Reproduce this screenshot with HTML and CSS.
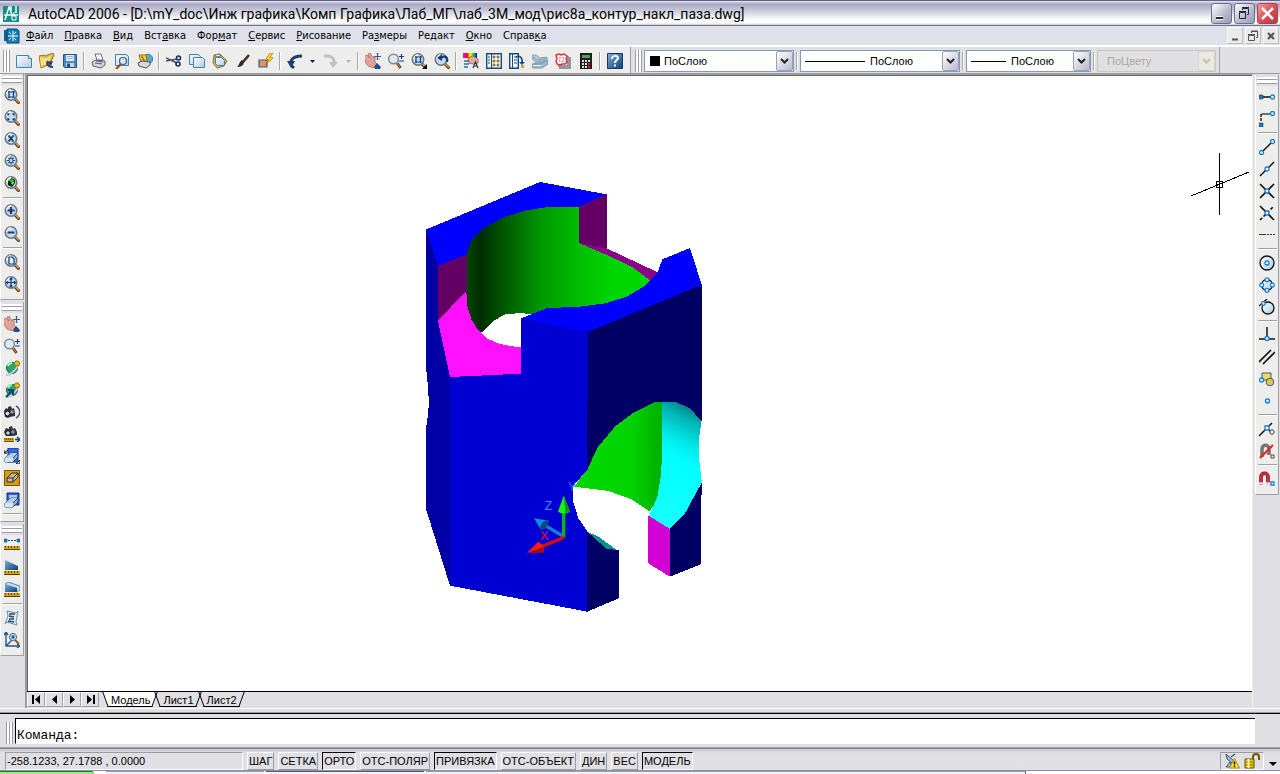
FILE: index.html
```html
<!DOCTYPE html>
<html lang="ru">

<head>
  <meta charset="utf-8">
  <title>AutoCAD 2006</title>
  <link rel="stylesheet" href="styles.css">
</head>

<body>
  <!-- Icon sprite -->
  <svg class="sprite" aria-hidden="true">
    <defs>
      <linearGradient id="g-paper" x1="0" y1="0" x2="1" y2="1"><stop offset="0" stop-color="#fff"/><stop offset="1" stop-color="#a9cbe6"/></linearGradient>
      <linearGradient id="g-steel" x1="0" y1="0" x2="1" y2="1"><stop offset="0" stop-color="#7fb2d9"/><stop offset="1" stop-color="#0f3d73"/></linearGradient>
      <linearGradient id="g-rainbow"><stop offset="0" stop-color="#f0f"/><stop offset=".3" stop-color="#f00"/><stop offset=".5" stop-color="#ff0"/><stop offset=".75" stop-color="#0d0"/><stop offset="1" stop-color="#00f"/></linearGradient>
      <linearGradient id="g-green"><stop offset="0" stop-color="#004a00"/><stop offset=".08" stop-color="#002c00"/><stop offset=".2" stop-color="#005400"/><stop offset=".4" stop-color="#009600"/><stop offset=".6" stop-color="#00bc00"/><stop offset=".8" stop-color="#00d600"/><stop offset="1" stop-color="#00d800"/></linearGradient>
      <linearGradient id="g-green2"><stop offset="0" stop-color="#00d800"/><stop offset=".6" stop-color="#00d400"/><stop offset="1" stop-color="#00ac00"/></linearGradient>
      <linearGradient id="g-cyan" x1=".6" y1="0" x2=".4" y2="1"><stop offset="0" stop-color="#007878"/><stop offset=".12" stop-color="#00b4b4"/><stop offset=".3" stop-color="#00e8e8"/><stop offset=".45" stop-color="#00ffff"/><stop offset="1" stop-color="#18ffff"/></linearGradient>
    </defs>
    <symbol id="lens" viewBox="0 0 16 16">
      <path d="M11 11l4.500 4.500" stroke="#5a3614" stroke-width="3"/>
      <path d="M11 10.500l4 4" stroke="#d9a066" stroke-width="1.200"/>
      <circle cx="7" cy="6.500" r="5.700" fill="#c3dbee" stroke="#6d747c" stroke-width="1.600"/>
      <path d="M3 6a4 4 0 0 1 4-4" fill="none" stroke="#fff" stroke-width="1.500"/>
    </symbol>
    <symbol id="zoom-window" viewBox="0 0 16 16"><use href="#lens"/><path d="M5 3v7M9.500 10V3M4 4h7M4 9h6.500" fill="none" stroke="#123f7a" stroke-width="1.200"/></symbol>
    <symbol id="zoom-dynamic" viewBox="0 0 16 16"><use href="#lens"/><path d="M4 5.500V4h1.500M8.500 4H10v1.500M10 8v1.500H8.500M5.500 9.500H4V8" fill="none" stroke="#123f7a" stroke-width="1.400"/></symbol>
    <symbol id="zoom-scale" viewBox="0 0 16 16"><use href="#lens"/><path d="M4.500 3.500l5 6M9.500 3.500l-5 6" stroke="#123f7a" stroke-width="1.900"/></symbol>
    <symbol id="zoom-center" viewBox="0 0 16 16"><use href="#lens"/><path d="M7 2.500v2.500M7 8v2.500M3 6.500h2.500M8.500 6.500H11M4.500 4l1.500 1.500M9.500 4L8 5.500M4.500 9L6 7.500M9.500 9L8 7.500" stroke="#123f7a" stroke-width="1.200"/></symbol>
    <symbol id="zoom-object" viewBox="0 0 16 16"><use href="#lens"/><path d="M4 5l4-3 3 2v3L8 11 4 9z" fill="#111"/><path d="M4 5l4-2 2 1-2 2.500z" fill="#0d0"/><path d="M7 7l3-2v2L8 9z" fill="#6f6"/></symbol>
    <symbol id="zoom-in" viewBox="0 0 16 16"><use href="#lens"/><path d="M7 3v7M3.500 6.500h7" stroke="#123f7a" stroke-width="2.200"/></symbol>
    <symbol id="zoom-out" viewBox="0 0 16 16"><use href="#lens"/><path d="M3.500 6.500h7" stroke="#123f7a" stroke-width="2"/></symbol>
    <symbol id="zoom-all" viewBox="0 0 16 16"><use href="#lens"/><path d="M5 3h3l2 2v5H5z" fill="#e8f3fc" stroke="#123f7a" stroke-width="1.200"/></symbol>
    <symbol id="zoom-extents" viewBox="0 0 16 16"><use href="#lens"/><path d="M7 2v9M2.500 6.500h9M5.700 3.500L7 2l1.300 1.500M5.700 9.500L7 11l1.300-1.500M4 5.200L2.500 6.500 4 7.800M10 5.200l1.500 1.300L10 7.800" fill="none" stroke="#123f7a" stroke-width="1.200"/></symbol>
    <symbol id="pan" viewBox="0 0 16 16">
      <path d="M0 3l2-1 3 3-2-4 2-1 3 5 1-2 1 1v5l2 2-4 4-5-2-2-3-2-1 2-1-3-3 1-1z" fill="#dfa39a" stroke="#a86e69" stroke-width=".8"/>
      <path d="M9 14l3-4 4 4-1 2h-5z" fill="#234d84"/>
      <path d="M12.500 0v7M9.500 3.500h6.500M11.500 1.200l1-1 1 1M11.500 5.800l1 1 1-1" fill="none" stroke="#2a5c96"/>
    </symbol>
    <symbol id="zoom-rt" viewBox="0 0 16 16">
      <path d="M9 10l3.500 5" stroke="#5a3614" stroke-width="2.800"/><path d="M9 10l3 4.500" stroke="#d9a066"/>
      <circle cx="5.500" cy="6" r="4.800" fill="#dceaf4" stroke="#85898c" stroke-width="1.500"/>
      <path d="M11 3.500h5M13.500 1v5M11 8h5" stroke="#123f7a" stroke-width="1.200"/>
    </symbol>
    <symbol id="zoom-fly" viewBox="0 0 16 16"><use href="#zoom-window"/><path d="M16 11v5h-5z" fill="#000"/></symbol>
    <symbol id="zoom-prev" viewBox="0 0 16 16"><use href="#lens"/><path d="M13 9c1-5-2-7-6-4" fill="none" stroke="#123f7a" stroke-width="2.200"/><path d="M3 5l5-4v7z" fill="#123f7a"/></symbol>

    <symbol id="new" viewBox="0 0 16 16"><path d="M.5 2.500h12l3 3v9H.5z" fill="url(#g-paper)" stroke="#4483ae"/><path d="M12.500 2.500v3h3" fill="#fff" stroke="#4483ae"/></symbol>
    <symbol id="open" viewBox="0 0 16 16"><path d="M0 3l5-1 1 1 8-3 1 2-4 9-9 4z" fill="#d9b54a" stroke="#9a7a24"/><path d="M1 4l6 1 6-3-4 8-7 4z" fill="#f6dd82"/><path d="M9 8c-2 3 0 6 5 6" fill="none" stroke="#223f6e" stroke-width="2"/><path d="M8 9l6-1-2 5z" fill="#223f6e"/></symbol>
    <symbol id="save" viewBox="0 0 16 16"><path d="M1.500 1.500h13v13h-12l-1-1z" fill="#4b87c2" stroke="#245487"/><path d="M4 2h8v6H4z" fill="#e6eff8"/><path d="M5 3.500h6M5 5.500h6" stroke="#8fb4d6"/><path d="M4 10h8v4H4z" fill="#c8d4e0"/><path d="M5 10.500h3V14H5z" fill="#24507f"/></symbol>
    <symbol id="print" viewBox="0 0 16 16"><path d="M4 1h6l2 6H6z" fill="#fff" stroke="#68717e"/><path d="M1 9l4-2 9 1v4l-4 3-8-2z" fill="#d4d8e0" stroke="#5a6270"/><path d="M4 10l7 1M5 8l7 1" stroke="#525a68"/></symbol>
    <symbol id="preview" viewBox="0 0 16 16"><path d="M1.500 1.500h11l2 2v9h-13z" fill="url(#g-paper)" stroke="#4483ae"/><circle cx="9" cy="8" r="3.500" fill="#d2e6f6" stroke="#4d5a68" stroke-width="1.200"/><path d="M7 11l-5 5" stroke="#8b5427" stroke-width="2.200"/></symbol>
    <symbol id="publish" viewBox="0 0 16 16"><circle cx="11" cy="6" r="4.700" fill="#58acd4" stroke="#3c7699"/><path d="M2 2h7l1 6-6 1z" fill="#ffd633" stroke="#906a00"/><path d="M4 4h2v3h2" fill="none" stroke="#8b4c00"/><path d="M1 10l4-2 8 1v3l-4 3-7-2z" fill="#d4d8e0" stroke="#4b5462"/></symbol>
    <symbol id="cut" viewBox="0 0 16 16"><path d="M0 5l11 5M0 8l11-2" stroke="#4d545e" stroke-width="1.500"/><circle cx="12.500" cy="5" r="2" fill="none" stroke="#172c64" stroke-width="1.600"/><circle cx="12" cy="11" r="2" fill="none" stroke="#172c64" stroke-width="1.600"/></symbol>
    <symbol id="copy" viewBox="0 0 16 16"><path d="M.5 1.500h9l2 2v8H.5z" fill="url(#g-paper)" stroke="#4483ae"/><path d="M4.500 4.500h9l2 2v8h-11z" fill="url(#g-paper)" stroke="#4483ae"/></symbol>
    <symbol id="paste" viewBox="0 0 16 16"><path d="M2 2l6-1 7 7-3 5-7 2-4-5z" fill="#d4ae5a" stroke="#957229"/><path d="M3.500 4.500h6l3 3v5h-7l-2-2z" fill="url(#g-paper)" stroke="#4483ae"/><path d="M3 2l4-1 2 2-5 1z" fill="#eee" stroke="#777"/></symbol>
    <symbol id="match" viewBox="0 0 16 16"><path d="M14 2l-6 7" stroke="#4b2d1b" stroke-width="2.600"/><path d="M9 9c0 4-4 5-7 5 2-1 2-5 5-7z" fill="#2d2d33"/></symbol>
    <symbol id="block" viewBox="0 0 16 16"><path d="M1 7h8v7H1z" fill="#ef9259" stroke="#2e5f94" stroke-width="1.200"/><path d="M12 0L8 6l3 1-4 5 8-7-3-1 3-4z" fill="#ffd91c" stroke="#a07000" stroke-width=".7"/></symbol>
    <symbol id="undo" viewBox="0 0 16 16"><path d="M7 15c-6-4-4-12 8-12" fill="none" stroke="#1c3c70" stroke-width="2.800"/><path d="M0 8h8l-4 7z" fill="#1c3c70"/></symbol>
    <symbol id="redo" viewBox="0 0 16 16"><path d="M1 3c8-1 12 3 9 9" fill="none" stroke="#bcbfc2" stroke-width="2.800"/><path d="M6 9h9l-5 6z" fill="#bcbfc2"/></symbol>
    <symbol id="drop" viewBox="0 0 5 3"><path d="M0 0h5L2.500 3z" fill="currentColor"/></symbol>
    <symbol id="props" viewBox="0 0 16 16"><path d="M0 0h14v5H0z" fill="url(#g-rainbow)"/><path d="M5 5l5-2 5 3v4l-5 1-4-1z" fill="#e1aba1" stroke="#915b55" stroke-width=".8"/><path d="M1 8h5M1 11h5M1 14h4" stroke="#386c96" stroke-width="1.500"/><path d="M10 15l2.500-6 2.500 6M11 13h3" fill="none" stroke="#233449" stroke-width="1.200"/></symbol>
    <symbol id="center" viewBox="0 0 16 16"><path d="M.7.7h14.600v14.600H.7z" fill="#f3f8fc" stroke="#17487f" stroke-width="1.400"/><path d="M5.500 1v14" stroke="#17487f"/><path d="M2 4h2M2 7h2M2 10h2" stroke="#17487f"/><path d="M7 3h2v2H7zM11 3h2v2h-2zM7 7h2v2H7zM11 7h2v2h-2zM7 11h2v2H7zM11 11h2v2h-2z" fill="#d5a72d" stroke="#6d5315" stroke-width=".6"/></symbol>
    <symbol id="palettes" viewBox="0 0 16 16"><path d="M.7.7h8.600v14.600H.7z" fill="#f3f8fc" stroke="#17487f" stroke-width="1.400"/><path d="M3.500 1v14M5 4h3M5 7h3M5 10h3" stroke="#17487f"/><path d="M7 4c4-2 7 1 6 6" fill="none" stroke="#17487f" stroke-width="1.500"/><path d="M10 9h6l-3 3z" fill="#17487f"/><path d="M12 12h3v3h-3z" fill="#d5a72d"/></symbol>
    <symbol id="sheets" viewBox="0 0 16 16"><path d="M0 2h4l4 3 7-1v4l-5 3H6L0 6z" fill="#c3d0da" stroke="#78909f" stroke-width=".8"/><path d="M0 2l5 4 10-2v4l-6 4-9-1 5-3-5-3z" fill="#8fb2ca"/><path d="M0 11h8l8-4v4l-6 4H0z" fill="#a1bac9" stroke="#6c8aa0" stroke-width=".8"/><path d="M1 12.500h8" stroke="#e4edf3"/></symbol>
    <symbol id="markup" viewBox="0 0 16 16"><path d="M4 15h11V4M3 13h10V3" fill="none" stroke="#78797d" stroke-width="1.500"/><path d="M1 2l3-1 2 1 3-1 3 2-1 3 1 3-2 2H7l-2 1-3-1-1-3 1-2z" fill="#fff" stroke="#e42a38" stroke-width="1.400"/><path d="M4 4l2 1 3-1-1 3 1 2-3-1-2 1 1-3z" fill="none" stroke="#f08a90" stroke-width=".8"/></symbol>
    <symbol id="calc" viewBox="0 0 16 16"><path d="M2 0h12v16H2z" fill="#1d1d1d"/><path d="M4 2h8v3H4z" fill="#4fa05b"/><path d="M4 7h2v2H4zM7 7h2v2H7zM10 7h2v2h-2zM4 10h2v2H4zM7 10h2v2H7zM4 13h2v2H4zM7 13h2v2H7z" fill="#ddd"/><path d="M10 10h2v2h-2zM10 13h2v2h-2z" fill="#e32424"/></symbol>
    <symbol id="help" viewBox="0 0 16 16"><path d="M.5.5h15v15H.5z" fill="url(#g-steel)" stroke="#123a6b"/><path d="M5 6c0-4 6-4 6-1 0 2-3 2-3 5M8 11.500v2" fill="none" stroke="#fff" stroke-width="2"/></symbol>

    <symbol id="orbit" viewBox="0 0 16 16"><circle cx="8" cy="8" r="5.500" fill="#28a868" stroke="#14603a"/><path d="M4 6a4 4 0 0 1 4-3" fill="none" stroke="#a5f5c8" stroke-width="2"/><path d="M2 15C8 14 14 9 14 3" fill="none" stroke="#8da9c4" stroke-width="2.200"/><path d="M2 15C8 14 14 9 14 3" fill="none" stroke="#fff" stroke-width=".8"/><circle cx="13" cy="3.500" r="2.600" fill="#e5ba1e" stroke="#90700a"/></symbol>
    <symbol id="orbit-c" viewBox="0 0 16 16"><use href="#orbit"/><path d="M2 15l6-6M4 8h5v5" fill="none" stroke="#1a4479" stroke-width="2.200"/></symbol>
    <symbol id="camera" viewBox="0 0 16 16"><path d="M0 7l2-3 2 1V3l3-1 1 3 2-1 1 5v3l-5 1-2 1-3-1z" fill="#30353d"/><circle cx="3.500" cy="9.500" r="2.500" fill="#cfd9e5" stroke="#000"/><circle cx="8" cy="8" r="1.800" fill="#8699ae"/><path d="M12 2c5 3 5 9 0 12" fill="none" stroke="#3e5878" stroke-width="1.500"/></symbol>
    <symbol id="ruler" viewBox="0 0 16 4" preserveAspectRatio="none"><path d="M0 0h16v4H0z" fill="#e0a800"/><path d="M1.500 0v2M4.500 0v2M7.500 0v2M10.500 0v2M13.500 0v2M0 3.500h16" stroke="#553c00"/></symbol>
    <symbol id="distance-c" viewBox="0 0 16 16"><path d="M0 6l2-4 3 1V1l3-1 1 3 2-1 2 4v3l-4 1H2z" fill="#30353d"/><circle cx="4" cy="7" r="2.300" fill="#cfd9e5" stroke="#000"/><circle cx="9" cy="6" r="1.700" fill="#8699ae"/><use href="#ruler" x="0" y="12" width="10" height="4"/><path d="M11 13.500h4M13 11l3 2.500-3 2.500" fill="none" stroke="#1a4479" stroke-width="1.600"/></symbol>
    <symbol id="brick" viewBox="0 0 16 16"><path d="M1 9l6-5h7v4l-5 5H1z" fill="#8fb1d1" stroke="#264f7c"/><path d="M1 9h8v4H1z" fill="#d5e3ef"/><path d="M1 9l6-5h7L9 9z" fill="#b4cde3"/><path d="M9 9l5-5" stroke="#264f7c"/></symbol>
    <symbol id="swivel" viewBox="0 0 16 16"><path d="M4 0h10v14H4z" fill="#3268e8" stroke="#183272"/><use href="#brick" y="1"/><path d="M0 5l4-3M0 2v3h3M12 16l4-4M13 16h3v-3" stroke="#000" fill="none"/></symbol>
    <symbol id="clip" viewBox="0 0 16 16"><path d="M.5.500h15v15H.5z" fill="#d59a0f" stroke="#7e5800"/><path d="M3 8l5-5h6v4l-5 5H3z" fill="#c2bba2" stroke="#302818"/><path d="M3 8h6l5-5M9 8v4" fill="none" stroke="#302818"/></symbol>
    <symbol id="clip2" viewBox="0 0 16 16"><path d="M3 1h12v12H3z" fill="#2e5fe0" stroke="#183272"/><path d="M5 3h8v3H5z" fill="#b4ccfa"/><use href="#brick" y="2"/></symbol>
    <symbol id="dist" viewBox="0 0 16 16"><path d="M0 1h3v3H0zM13 1h3v3h-3z" fill="#167ed0" stroke="#0f4d85" stroke-width=".6"/><path d="M4 2.500h8" stroke="#0f4d85" stroke-dasharray="2 1"/><use href="#ruler" y="8" width="16" height="4"/></symbol>
    <symbol id="area" viewBox="0 0 16 16"><path d="M1 0l13 6v4H1z" fill="url(#g-steel)"/><use href="#ruler" y="11" width="16" height="4"/></symbol>
    <symbol id="mass" viewBox="0 0 16 16"><path d="M1 2l3-2 12 4v4l-3 2z" fill="#c4def0" stroke="#538ab5"/><path d="M1 2l12 4v4H1z" fill="url(#g-steel)"/><use href="#ruler" y="11" width="16" height="4"/></symbol>
    <symbol id="list" viewBox="0 0 16 16"><path d="M3 1l9 2 2-2-2 11 1 3-10-3-2 2 3-8z" fill="#dfeaf3" stroke="#6f92ae"/><path d="M5 4h6M5 6l5 1M5 9h5M4 11l6 1" stroke="#28496a" stroke-width="1.300"/></symbol>
    <symbol id="locate" viewBox="0 0 16 16"><path d="M2 0v14h14M0 3l2-3 2 3M13 12l3 2-3 2M2 14l8-8" fill="none" stroke="#245a8c" stroke-width="1.400"/><path d="M11 8l4 4" stroke="#8b5427" stroke-width="2"/><circle cx="9" cy="5" r="3.600" fill="#c3dbee" stroke="#5d6872"/><path d="M7.500 3.500h3v3h-3z" fill="#145ca0"/></symbol>

    <symbol id="s-track" viewBox="0 0 16 16"><path d="M3 8h8" stroke="#444" stroke-width="2"/><path d="M0 6h4v4H0z" fill="#167ed0" stroke="#333" stroke-width=".6"/><circle cx="13.500" cy="8" r="2" fill="#fff" stroke="#167ed0" stroke-width="1.300"/></symbol>
    <symbol id="s-from" viewBox="0 0 16 16"><path d="M2.500 3H11" stroke="#444" stroke-width="1.500"/><path d="M2 3v8" stroke="#222" stroke-width="1.500" stroke-dasharray="3 1"/><path d="M0 12h4v4H0z" fill="#167ed0" stroke="#333" stroke-width=".6"/><circle cx="13.500" cy="2.500" r="2" fill="#fff" stroke="#167ed0" stroke-width="1.300"/></symbol>
    <symbol id="s-end" viewBox="0 0 16 16"><path d="M3 13L13 3" stroke="#111" stroke-width="1.500"/><circle cx="2.500" cy="13.500" r="2" fill="#fff" stroke="#167ed0" stroke-width="1.300"/><circle cx="13.500" cy="2.500" r="2" fill="#fff" stroke="#167ed0" stroke-width="1.300"/></symbol>
    <symbol id="s-mid" viewBox="0 0 16 16"><path d="M1 15L15 1" stroke="#111" stroke-width="1.500"/><circle cx="8" cy="8" r="2" fill="#fff" stroke="#167ed0" stroke-width="1.300"/></symbol>
    <symbol id="s-int" viewBox="0 0 16 16"><path d="M1 1l14 14M1 15L15 1" stroke="#111" stroke-width="1.600"/><circle cx="8" cy="8" r="2" fill="#fff" stroke="#167ed0" stroke-width="1.300"/></symbol>
    <symbol id="s-app" viewBox="0 0 16 16"><path d="M1 1l14 14" stroke="#111" stroke-width="1.600"/><path d="M1 15L15 1" stroke="#111" stroke-width="1.600" stroke-dasharray="3 2"/><circle cx="8" cy="8" r="2" fill="#fff" stroke="#167ed0" stroke-width="1.300"/></symbol>
    <symbol id="s-ext" viewBox="0 0 16 16"><path d="M0 7.500h7" stroke="#333"/><path d="M8 7.500h8" stroke="#333" stroke-dasharray="2 1"/></symbol>
    <symbol id="s-cen" viewBox="0 0 16 16"><circle cx="8" cy="8" r="7" fill="url(#g-paper)" stroke="#111" stroke-width="1.300"/><circle cx="8" cy="8" r="2" fill="#fff" stroke="#167ed0" stroke-width="1.300"/></symbol>
    <symbol id="s-qua" viewBox="0 0 16 16"><circle cx="8" cy="8" r="5.500" fill="url(#g-paper)" stroke="#111" stroke-width="1.300"/><g fill="#fff" stroke="#167ed0" stroke-width="1.300"><circle cx="8" cy="2.700" r="1.900"/><circle cx="8" cy="13.300" r="1.900"/><circle cx="2.700" cy="8" r="1.900"/><circle cx="13.300" cy="8" r="1.900"/></g></symbol>
    <symbol id="s-tan" viewBox="0 0 16 16"><circle cx="9" cy="9" r="6" fill="url(#g-paper)" stroke="#111" stroke-width="1.300"/><path d="M0 7l8-7" stroke="#111" stroke-width="1.300"/><circle cx="4.500" cy="4.500" r="1.800" fill="#fff" stroke="#167ed0" stroke-width="1.300"/></symbol>
    <symbol id="s-per" viewBox="0 0 16 16"><path d="M8 0v10M0 12h16" stroke="#111" stroke-width="1.500"/><circle cx="8" cy="11.500" r="2" fill="#fff" stroke="#167ed0" stroke-width="1.300"/></symbol>
    <symbol id="s-par" viewBox="0 0 16 16"><path d="M0 13L12 1M4 15L16 3" stroke="#111" stroke-width="1.700"/></symbol>
    <symbol id="s-ins" viewBox="0 0 16 16"><path d="M3 2h9v7H3z" fill="#f4d75f" stroke="#345e85"/><circle cx="11" cy="11" r="3.800" fill="#e4c64c" stroke="#345e85"/><circle cx="2.500" cy="9" r="2" fill="#fff" stroke="#167ed0" stroke-width="1.300"/></symbol>
    <symbol id="s-nod" viewBox="0 0 16 16"><circle cx="8.500" cy="8" r="2" fill="#fff" stroke="#167ed0" stroke-width="1.400"/></symbol>
    <symbol id="s-nea" viewBox="0 0 16 16"><path d="M0 15L13 2M7 6l5 5" stroke="#111" stroke-width="1.500"/><path d="M6 5h4v4H6z" fill="#fff" stroke="#167ed0" stroke-width="1.300"/><circle cx="13" cy="11" r="2.200" fill="#eee" stroke="#444"/></symbol>
    <symbol id="s-none" viewBox="0 0 16 16"><path d="M3 14V6c0-5 7-5 7 0v6" fill="none" stroke="#77746c" stroke-width="3.500"/><path d="M1 15L14 2" stroke="#e32424" stroke-width="2"/><path d="M12 12h3v3h-3z" fill="#fff" stroke="#444"/></symbol>
    <symbol id="s-set" viewBox="0 0 16 16"><path d="M2 14V6c0-5 7-5 7 0v7" fill="none" stroke="#7d0d1d" stroke-width="3.600"/><path d="M2 12V6c0-5 7-5 7 0v5" fill="none" stroke="#d92c44" stroke-width="2"/><path d="M0 12.500h4M7 12.500h4" stroke="#ddd" stroke-width="2.500"/><path d="M12 11h3v3h-3z" fill="#fff" stroke="#167ed0" stroke-width="1.300"/></symbol>
  </svg>

  <!-- Title bar -->
  <header class="title-bar">
    <svg class="app-logo" viewBox="0 0 16 16" aria-hidden="true"><path d="M0 0h16v16H0z" fill="#168d86"/><path d="M2 14L6 1l5 13M1 9h14M8 0v5M13 0v7" fill="none" stroke="#e6fffc" stroke-width="1.500"/><path d="M9 10h4v4H9zM11 6v4" fill="#168d86" stroke="#fff"/></svg>
    <h1 class="title-text">AutoCAD 2006 - [D:\mY_doc\Инж графика\Комп Графика\Лаб_МГ\лаб_3М_мод\рис8а_контур_накл_паза.dwg]</h1>
    <div class="window-buttons">
      <button class="win-btn" aria-label="Свернуть"><svg viewBox="0 0 19 19"><path d="M4 14h7" stroke="#fff" stroke-width="4"/><path d="M4 14h7" stroke="#23263c" stroke-width="2"/></svg></button>
      <button class="win-btn" aria-label="Восстановить"><svg viewBox="0 0 19 19" fill="none" stroke="#23263c"><path d="M4.500 8.500h6v6h-6zM4 7.500h7M7.500 6V4.500h6v6H12M7 3.500h7"/></svg></button>
      <button class="win-btn win-close" aria-label="Закрыть"><svg viewBox="0 0 19 19"><path d="M4 4l11 11M15 4L4 15" stroke="#fff" stroke-width="2.500"/></svg></button>
    </div>
  </header>

  <!-- Menu -->
  <nav class="menu-bar">
    <svg class="doc-logo" viewBox="0 0 16 16" aria-hidden="true"><path d="M0 2h11v11H0z" fill="#1b5f88"/><path d="M3 1h10l2 2v12H3z" fill="#1182b8" stroke="#0c4564"/><path d="M9 3v10M4 8h10M5 4l2 2M12 4l-2 2M5 12l2-2M12 12l-2-2" stroke="#fff"/></svg>
    <button class="menu-item"><u>Ф</u>айл</button>
    <button class="menu-item"><u>П</u>равка</button>
    <button class="menu-item"><u>В</u>ид</button>
    <button class="menu-item">Вст<u>а</u>вка</button>
    <button class="menu-item">Фор<u>м</u>ат</button>
    <button class="menu-item"><u>С</u>ервис</button>
    <button class="menu-item"><u>Р</u>исование</button>
    <button class="menu-item">Ра<u>з</u>меры</button>
    <button class="menu-item">Ре<u>д</u>акт</button>
    <button class="menu-item"><u>О</u>кно</button>
    <button class="menu-item">Справ<u>к</u>а</button>
    <div class="doc-buttons">
      <button class="doc-btn" aria-label="Свернуть чертеж"><svg viewBox="0 0 14 14"><path d="M4 10.500h6" stroke="#55554f" stroke-width="2"/></svg></button>
      <button class="doc-btn" aria-label="Восстановить чертеж"><svg viewBox="0 0 14 14" fill="none" stroke="#55554f"><path d="M2.500 6.500h6v5h-6zM2 5.500h7M5.500 4V2.500h6v6H10M5 2h7"/></svg></button>
      <button class="doc-btn" aria-label="Закрыть чертеж"><svg viewBox="0 0 14 14"><path d="M4 4l6 6M10 4l-6 6" stroke="#55554f" stroke-width="2.200"/></svg></button>
    </div>
  </nav>

  <!-- Toolbars -->
  <div class="toolbar-row">
    <div class="toolbar">
      <span class="grip"></span>
      <button class="tool" aria-label="Создать"><svg><use href="#new"/></svg></button>
      <button class="tool" aria-label="Открыть"><svg><use href="#open"/></svg></button>
      <button class="tool" aria-label="Сохранить"><svg><use href="#save"/></svg></button>
      <span class="sep"></span>
      <button class="tool" aria-label="Печать"><svg><use href="#print"/></svg></button>
      <button class="tool" aria-label="Просмотр"><svg><use href="#preview"/></svg></button>
      <button class="tool" aria-label="Публикация"><svg><use href="#publish"/></svg></button>
      <span class="sep"></span>
      <button class="tool" aria-label="Вырезать"><svg><use href="#cut"/></svg></button>
      <button class="tool" aria-label="Копировать"><svg><use href="#copy"/></svg></button>
      <button class="tool" aria-label="Вставить"><svg><use href="#paste"/></svg></button>
      <button class="tool" aria-label="Копирование свойств"><svg><use href="#match"/></svg></button>
      <button class="tool" aria-label="Редактор блоков"><svg><use href="#block"/></svg></button>
      <span class="sep"></span>
      <button class="tool" aria-label="Отменить"><svg><use href="#undo"/></svg></button>
      <button class="tool-drop" aria-label="Список отмены"><svg><use href="#drop"/></svg></button>
      <button class="tool" aria-label="Повторить" disabled><svg><use href="#redo"/></svg></button>
      <button class="tool-drop" aria-label="Список повтора" disabled><svg><use href="#drop"/></svg></button>
      <span class="sep"></span>
      <button class="tool" aria-label="Панорамирование"><svg><use href="#pan"/></svg></button>
      <button class="tool" aria-label="Зумирование"><svg><use href="#zoom-rt"/></svg></button>
      <button class="tool" aria-label="Показать рамкой"><svg><use href="#zoom-fly"/></svg></button>
      <button class="tool" aria-label="Показать предыдущий"><svg><use href="#zoom-prev"/></svg></button>
      <span class="sep"></span>
      <button class="tool" aria-label="Свойства"><svg><use href="#props"/></svg></button>
      <button class="tool" aria-label="Центр управления"><svg><use href="#center"/></svg></button>
      <button class="tool" aria-label="Инструментальные палитры"><svg><use href="#palettes"/></svg></button>
      <button class="tool" aria-label="Подшивки"><svg><use href="#sheets"/></svg></button>
      <button class="tool" aria-label="Пометки"><svg><use href="#markup"/></svg></button>
      <button class="tool" aria-label="Калькулятор"><svg><use href="#calc"/></svg></button>
      <span class="sep"></span>
      <button class="tool" aria-label="Справка"><svg><use href="#help"/></svg></button>
    </div>
    <div class="toolbar toolbar-props">
      <span class="grip"></span>
      <label class="combo combo-color" aria-label="Цвет">
        <span class="swatch"></span>
        <select><option>ПоСлою</option></select>
        <span class="combo-arrow"><svg viewBox="0 0 9 6"><path d="M1 1l3.500 3.500L8 1" fill="none" stroke="#222" stroke-width="2"/></svg></span>
      </label>
      <span class="sep"></span>
      <label class="combo combo-type" aria-label="Тип линий">
        <span class="line-sample"></span>
        <select><option>ПоСлою</option></select>
        <span class="combo-arrow"><svg viewBox="0 0 9 6"><path d="M1 1l3.500 3.500L8 1" fill="none" stroke="#222" stroke-width="2"/></svg></span>
      </label>
      <span class="sep"></span>
      <label class="combo combo-weight" aria-label="Вес линий">
        <span class="line-sample"></span>
        <select><option>ПоСлою</option></select>
        <span class="combo-arrow"><svg viewBox="0 0 9 6"><path d="M1 1l3.500 3.500L8 1" fill="none" stroke="#222" stroke-width="2"/></svg></span>
      </label>
      <span class="sep"></span>
      <label class="combo combo-plot" aria-label="Стиль печати">
        <select disabled><option>ПоЦвету</option></select>
        <span class="combo-arrow"><svg viewBox="0 0 9 6"><path d="M1 1l3.500 3.500L8 1" fill="none" stroke="#c3c0ae" stroke-width="2"/></svg></span>
      </label>
    </div>
  </div>

  <!-- Work area -->
  <div class="workspace">
    <aside class="rail">
      <div class="toolbar-v">
        <span class="grip-h"></span>
        <button class="tool" aria-label="Рамка"><svg><use href="#zoom-window"/></svg></button>
        <button class="tool" aria-label="Динамика"><svg><use href="#zoom-dynamic"/></svg></button>
        <button class="tool" aria-label="Масштаб"><svg><use href="#zoom-scale"/></svg></button>
        <button class="tool" aria-label="Центр"><svg><use href="#zoom-center"/></svg></button>
        <button class="tool" aria-label="Объект"><svg><use href="#zoom-object"/></svg></button>
        <span class="sep-h"></span>
        <button class="tool" aria-label="Увеличить"><svg><use href="#zoom-in"/></svg></button>
        <button class="tool" aria-label="Уменьшить"><svg><use href="#zoom-out"/></svg></button>
        <span class="sep-h"></span>
        <button class="tool" aria-label="Все"><svg><use href="#zoom-all"/></svg></button>
        <button class="tool" aria-label="Границы"><svg><use href="#zoom-extents"/></svg></button>
      </div>
      <div class="toolbar-v">
        <span class="grip-h"></span>
        <button class="tool" aria-label="3D панорамирование"><svg><use href="#pan"/></svg></button>
        <button class="tool" aria-label="3D зумирование"><svg><use href="#zoom-rt"/></svg></button>
        <button class="tool" aria-label="3D орбита"><svg><use href="#orbit"/></svg></button>
        <button class="tool" aria-label="Непрерывная орбита"><svg><use href="#orbit-c"/></svg></button>
        <button class="tool" aria-label="Шарнир"><svg><use href="#camera"/></svg></button>
        <button class="tool" aria-label="Регулировка расстояния"><svg><use href="#distance-c"/></svg></button>
        <button class="tool" aria-label="Регулировка плоскостей"><svg><use href="#swivel"/></svg></button>
        <button class="tool" aria-label="Передняя плоскость"><svg><use href="#clip"/></svg></button>
        <button class="tool" aria-label="Задняя плоскость"><svg><use href="#clip2"/></svg></button>
        <span class="sep-h"></span>
      </div>
      <div class="toolbar-v">
        <span class="grip-h"></span>
        <button class="tool" aria-label="Расстояние"><svg><use href="#dist"/></svg></button>
        <button class="tool" aria-label="Площадь"><svg><use href="#area"/></svg></button>
        <button class="tool" aria-label="Масса"><svg><use href="#mass"/></svg></button>
        <span class="sep-h"></span>
        <button class="tool" aria-label="Список"><svg><use href="#list"/></svg></button>
        <button class="tool" aria-label="Координаты точки"><svg><use href="#locate"/></svg></button>
      </div>
    </aside>

    <main class="drawing">
      <div class="canvas">
        <svg class="scene" role="img" aria-label="3D модель">
          <!-- Model, drawn three units to the pixel; inner surfaces first, faces over them -->
          <g transform="translate(387 94) scale(.33333)" shape-rendering="crispEdges">
            <path fill="url(#g-green)" d="M495 106H405L335 117 265 138 200 171 166 208 151 250V380L156 420 168 454 186 482 203 487 235 453 270 433 320 429 348 433 400 420 500 418 570 408 635 388 690 355 710 330 650 288 580 253 495 219z"/>
            <path fill="url(#g-green2)" d="M512 902L540 830 590 765 650 720 722 690H750V850L745 920 735 980 703 1024 650 988 580 963 478 950z"/>
            <path fill="url(#g-cyan)" d="M742 690L780 688 830 710 860 750 853 800V870L860 935 812 1034 765 1079 702 1038 727 980 737 920 742 850z"/>
            <path fill="#00f" d="M375 36L575 73 492 110H405L335 121 265 142 205 175 170 210 155 254 69 290 34 178z"/>
            <path fill="#0000a4" d="M34 178L69 288V452L105 620V1247L34 1020V768L38 740 42 700 38 640 34 602z"/>
            <path fill="#640064" d="M69 288L155 254V363L69 452zM492 110L575 73V237L492 219z"/>
            <path fill="#8c008c" d="M492 219L575 235 728 307 708 333 650 290 580 257z"/>
            <path fill="#ff10ff" d="M154 363L157 410 170 450 188 478 215 505 255 522 300 530H318V612L105 621 69 452z"/>
            <path fill="#00f" d="M318 445L400 413 480 412 570 400 635 380 690 347 728 307 742 268 825 234 860 344 519 487z"/>
            <path fill="#0000d2" d="M318 445L519 486V897L475 948 473 990 490 1045 519 1087 517 1325 105 1247V621L318 611z"/>
            <path fill="#000064" d="M519 486L860 344V755L825 715 780 695H722L655 728 600 770 550 830 517 897V696H519z"/>
            <path fill="#d200d2" d="M700 1037L765 1077V1220L700 1180z"/>
            <path fill="#009494" d="M517 1085L550 1100 606 1140 575 1140z"/>
            <path fill="#000064" d="M765 1077L810 1030 860 938 857 1183 765 1220zM517 1085L575 1137 611 1140V1285L517 1325z"/>
          </g>
          <!-- UCS icon -->
          <g transform="translate(387 94) scale(.33333)">
            <text class="axis-label" x="389" y="1019" fill="#2a8cff">Z</text>
            <path d="M446 1100L380 1060" stroke="#1080d8" stroke-width="10"/>
            <path d="M357 1045L403 1052 376 1077z" fill="#108ce8"/><ellipse cx="388" cy="1065" rx="9" ry="17" transform="rotate(38 388 1065)" fill="#0a4a80"/>
            <path d="M446 1102V1020" stroke="#08b808" stroke-width="10"/>
            <path d="M446 977L465 1025Q447 1036 429 1025z" fill="#1cf01c"/><path d="M446 977L465 1025 452 1030z" fill="#0a9c0a"/>
            <path d="M448 1102L380 1130" stroke="#d80c0c" stroke-width="10"/>
            <path d="M336 1148L370 1115Q390 1125 386 1147z" fill="#ff1a1a"/><path d="M336 1148L386 1147 385 1132z" fill="#a80808"/>
            <text class="axis-label" x="376" y="1109" fill="#f01020">X</text>
            <text class="axis-label" x="459" y="963" fill="#2c6cf0">Y</text>
          </g>
          <!-- Crosshair -->
          <g transform="translate(1191 108)" fill="none" stroke="#000" shape-rendering="crispEdges">
            <path d="M.5-31v62M-28 12L30-12M-2.500-2.500h6v6h-6z"/>
          </g>
        </svg>
      </div>
      <div class="sheet-bar">
        <div class="sheet-nav">
          <button class="nav-btn" aria-label="Первый лист"><svg viewBox="0 0 9 9"><path d="M0 0h2v9H0zM8 0v9L3 4.500z"/></svg></button>
          <button class="nav-btn" aria-label="Предыдущий лист"><svg viewBox="0 0 9 9"><path d="M7 0v9L2 4.500z"/></svg></button>
          <button class="nav-btn" aria-label="Следующий лист"><svg viewBox="0 0 9 9"><path d="M2 0v9l5-4.500z"/></svg></button>
          <button class="nav-btn" aria-label="Последний лист"><svg viewBox="0 0 9 9"><path d="M1 0v9l5-4.500zM7 0h2v9H7z"/></svg></button>
        </div>
        <button class="sheet-tab active">Модель</button>
        <button class="sheet-tab">Лист1</button>
        <button class="sheet-tab">Лист2</button>
      </div>
    </main>

    <aside class="rail rail-right">
      <div class="toolbar-v">
        <span class="grip-h"></span>
        <button class="tool" aria-label="Точка отслеживания"><svg><use href="#s-track"/></svg></button>
        <button class="tool" aria-label="Смещение"><svg><use href="#s-from"/></svg></button>
        <span class="sep-h"></span>
        <button class="tool" aria-label="Конточка"><svg><use href="#s-end"/></svg></button>
        <button class="tool" aria-label="Середина"><svg><use href="#s-mid"/></svg></button>
        <button class="tool" aria-label="Пересечение"><svg><use href="#s-int"/></svg></button>
        <button class="tool" aria-label="Кажущееся пересечение"><svg><use href="#s-app"/></svg></button>
        <button class="tool" aria-label="Продолжение линии"><svg><use href="#s-ext"/></svg></button>
        <span class="sep-h"></span>
        <button class="tool" aria-label="Центр окружности"><svg><use href="#s-cen"/></svg></button>
        <button class="tool" aria-label="Квадрант"><svg><use href="#s-qua"/></svg></button>
        <button class="tool" aria-label="Касательная"><svg><use href="#s-tan"/></svg></button>
        <span class="sep-h"></span>
        <button class="tool" aria-label="Нормаль"><svg><use href="#s-per"/></svg></button>
        <button class="tool" aria-label="Параллельно"><svg><use href="#s-par"/></svg></button>
        <button class="tool" aria-label="Точка вставки"><svg><use href="#s-ins"/></svg></button>
        <button class="tool" aria-label="Узел"><svg><use href="#s-nod"/></svg></button>
        <span class="sep-h"></span>
        <button class="tool" aria-label="Ближайшая"><svg><use href="#s-nea"/></svg></button>
        <button class="tool" aria-label="Без привязки"><svg><use href="#s-none"/></svg></button>
        <span class="sep-h"></span>
        <button class="tool" aria-label="Режимы привязки"><svg><use href="#s-set"/></svg></button>
      </div>
    </aside>
  </div>

  <!-- Command line -->
  <div class="command-dock">
    <span class="grip"></span>
    <div class="command-box">
      <label for="command">Команда:</label>
      <input type="text" id="command" autocomplete="off">
    </div>
  </div>

  <!-- Status bar -->
  <footer class="status-bar">
    <output class="coords">-258.1233, 27.1788 , 0.0000</output>
    <button class="mode">ШАГ</button>
    <button class="mode">СЕТКА</button>
    <button class="mode on">ОРТО</button>
    <button class="mode">ОТС-ПОЛЯР</button>
    <button class="mode on">ПРИВЯЗКА</button>
    <button class="mode">ОТС-ОБЪЕКТ</button>
    <button class="mode">ДИН</button>
    <button class="mode">ВЕС</button>
    <button class="mode on">МОДЕЛЬ</button>
    <div class="tray">
      <svg viewBox="0 0 16 16"><path d="M2 1l9 8-3 1-5-4zM6 9l-4 5h6z" fill="#a9bfd8" stroke="#3a5478"/><path d="M7 4l4-3" stroke="#3a5478" stroke-width="1.500"/><path d="M10.500 5.500l5 9.500h-10z" fill="#ffe81c" stroke="#b08c00"/><path d="M10.500 8.500v3M10.500 12.500v1.500" stroke="#000" stroke-width="1.500"/></svg>
      <svg viewBox="0 0 16 16"><path d="M9 7V4c0-4 6-4 6 0v3" fill="none" stroke="#6b5c00" stroke-width="2"/><path d="M1 6h9v9H1z" fill="#e0c81c" stroke="#5e5000"/><path d="M1 9h9M1 12h9" stroke="#8a7700"/><path d="M4.500 6v9" stroke="#fff490" stroke-width="2"/></svg>
    </div>
    <button class="tray-menu" aria-label="Меню строки состояния"><svg viewBox="0 0 8 4"><path d="M0 0h8L4 4z"/></svg></button>
  </footer>

  <div class="taskbar">
    <span class="task-start"></span>
    <span class="task-item"></span>
    <span class="task-item task-item-dark"></span>
    <span class="task-item task-item-wide"></span>
  </div>
</body>

</html>
```
FILE: styles.css
```css
* {
  box-sizing: border-box;
}

body {
  margin: 0;
  height: 100vh;
  display: flex;
  flex-direction: column;
  overflow: hidden;
  background: #e0dfe3;
  color: #000;
  font-family: "Liberation Sans", Arial, sans-serif;
  font-size: 11px;
}

button,
select,
input {
  margin: 0;
  padding: 0;
  border: 0;
  background: none;
  color: inherit;
  font: inherit;
}

svg {
  display: block;
}

.sprite {
  position: absolute;
  width: 0;
  height: 0;
}

/* Title bar */
.title-bar {
  flex: none;
  display: flex;
  align-items: center;
  height: 26px;
  padding: 1px 2px 0 3px;
  border-top: 1px solid #64648a;
  border-bottom: 1px solid #72728f;
  background: linear-gradient(#e8e8f2 0, #a8a8c4 3px, #c6c6d8 9px, #fff 19px, #fff 22px, #c4c4d2 24px);
}

.app-logo {
  width: 16px;
  height: 16px;
  margin-right: 9px;
}

.title-text {
  margin: 0;
  font-family: Roboto, sans-serif;
  font-size: 14px;
  font-weight: 400;
  white-space: nowrap;
}

.window-buttons {
  display: flex;
  gap: 2px;
  margin-left: auto;
}

.win-btn {
  width: 21px;
  height: 21px;
  border: 1px solid #6c6c8c;
  border-radius: 3px;
  background: linear-gradient(135deg, #fff, #b8b8cc 60%, #9c9cb8);
}

.win-close {
  border-color: #a8424a;
  background: linear-gradient(135deg, #f4a0a0, #d8505a 50%, #b83844);
}

/* Menu bar */
.menu-bar {
  flex: none;
  display: flex;
  align-items: center;
  gap: 11px;
  height: 21px;
  padding: 0 1px 0 4px;
  border-bottom: 2px solid #fff;
  background: #dee1ea;
  font-family: "DejaVu Sans Condensed", "DejaVu Sans", sans-serif;
  font-size: 11px;
}

.doc-logo {
  width: 16px;
  height: 16px;
  margin-right: -5px;
}

.menu-item {
  line-height: 16px;
}

.doc-buttons {
  display: flex;
  gap: 2px;
  margin-left: auto;
}

.doc-btn {
  width: 16px;
  height: 17px;
  border: 1px solid;
  border-color: #f8f8f8 #c0c0bc #c0c0bc #f8f8f8;
  background: #eaeae8;
}

/* Horizontal toolbars */
.toolbar-row {
  flex: none;
  display: flex;
  height: 27px;
  border-bottom: 1px solid #9c9ca0;
}

.toolbar {
  display: flex;
  align-items: center;
  height: 26px;
  padding: 2px 4px 0 3px;
  border-right: 1px solid #a0a0a4;
  background: #ededec;
}

.toolbar-props {
  margin-left: 1px;
  padding: 2px 3px 0;
  background: #e0dfe3;
}

.grip {
  flex: none;
  width: 7px;
  height: 22px;
  margin-right: 2px;
  border: solid #9c9ca4;
  border-width: 0 1px;
  background: linear-gradient(90deg, #fff 2px, #9c9ca4 2px, #9c9ca4 3px, #fff 3px);
}

.tool {
  flex: none;
  display: grid;
  place-items: center;
  width: 23px;
  height: 22px;
}

.tool svg {
  width: 16px;
  height: 16px;
}

.tool-drop {
  display: grid;
  place-items: center;
  width: 13px;
  height: 22px;
  color: #0c1c6c;
}

.tool-drop:disabled {
  color: #b4b4b8;
}

.tool-drop svg {
  width: 5px;
  height: 3px;
}

.sep {
  flex: none;
  width: 6px;
  height: 18px;
  background: linear-gradient(90deg, transparent 2px, #a8a8ac 2px, #a8a8ac 3px, #fff 3px, #fff 4px, transparent 4px);
}

/* Drop-down lists */
.combo {
  display: flex;
  align-items: center;
  height: 22px;
  border: 1px solid #7f9db9;
  background: #fff;
}

.combo select {
  flex: 1;
  min-width: 0;
  appearance: none;
}

.combo-color {
  width: 150px;
}

.combo-type {
  width: 160px;
}

.combo-weight {
  width: 125px;
}

.combo-plot {
  width: 119px;
  padding-left: 9px;
  border-color: #c9c7ba;
  background: transparent;
}

.combo-plot select {
  color: #aca899;
  opacity: 1;
}

.swatch {
  width: 10px;
  height: 10px;
  margin: 0 4px 0 5px;
  background: #000;
}

.line-sample {
  width: 60px;
  height: 1px;
  margin: 0 5px 0 4px;
  background: #000;
}

.combo-weight .line-sample {
  width: 35px;
}

.combo-arrow {
  display: grid;
  place-items: center;
  width: 17px;
  height: 20px;
  border: 1px solid #a0a0b4;
  border-radius: 2px;
  background: linear-gradient(135deg, #fff, #b8b8cc);
}

.combo-plot .combo-arrow {
  border-color: #d8d6cc;
  background: #e8e8e4;
}

.combo-arrow svg {
  width: 9px;
  height: 6px;
}

/* Work area */
.workspace {
  flex: 1;
  display: flex;
  min-height: 0;
}

.rail {
  flex: none;
  display: flex;
  flex-direction: column;
  gap: 2px;
  width: 25px;
  padding-right: 1px;
}

.rail-right {
  width: 27px;
  padding: 1px 1px 0 2px;
}

.toolbar-v {
  display: flex;
  flex-direction: column;
  align-items: center;
  padding-bottom: 4px;
  border-right: 1px solid #a0a0a4;
  border-bottom: 1px solid #a0a0a4;
  border-left: 1px solid #fff;
  background: #ededec;
}

.rail .tool {
  width: 22px;
}

.grip-h {
  align-self: stretch;
  height: 11px;
  border: solid #e0dfe3;
  border-width: 0 1px;
  background: linear-gradient(#e0dfe3 2px, #fff 2px, #fff 4px, #9c9ca4 4px, #9c9ca4 5px, #fff 5px, #fff 8px, #9c9ca4 8px, #9c9ca4 9px, #e0dfe3 9px);
}

.sep-h {
  width: 19px;
  height: 6px;
  background: linear-gradient(transparent 2px, #a0a0a4 2px, #a0a0a4 3px, #fff 3px, #fff 4px, transparent 4px);
}

.drawing {
  flex: 1;
  display: flex;
  flex-direction: column;
  min-width: 0;
  border: solid #9c9ca0;
  border-width: 1px 1px 0 2px;
  border-right-color: #f1efe2;
}

.canvas {
  flex: 1;
  min-height: 0;
  border: solid #6a6a6c;
  border-width: 1px 0 0 1px;
  background: #fff;
}

.scene {
  width: 100%;
  height: 100%;
}

.axis-label {
  font-size: 37px;
}

/* Model and layout tabs */
.sheet-bar {
  flex: none;
  display: flex;
  height: 17px;
  border-top: 1px solid #000;
}

.sheet-nav {
  display: flex;
  margin-right: 6px;
}

.nav-btn {
  display: grid;
  place-items: center;
  width: 18px;
  height: 15px;
  border: 1px solid #fff;
  border-right-color: #a0a0a4;
  border-bottom-color: #a0a0a4;
}

.nav-btn svg {
  width: 9px;
  height: 9px;
}

.sheet-tab {
  position: relative;
  z-index: 0;
  height: 15px;
  margin-right: 2px;
  padding: 0 5px 0 6px;
  line-height: 14px;
}

.sheet-tab::before,
.sheet-tab::after {
  content: "";
  position: absolute;
  z-index: -1;
  top: 0;
  bottom: 0;
  border: solid #000;
  border-width: 0 0 1px 1px;
}

.sheet-tab::before {
  left: 0;
  right: 40%;
  transform: skewX(20deg);
}

.sheet-tab::after {
  left: 40%;
  right: 0;
  border-width: 0 1px 1px 0;
  transform: skewX(-20deg);
}

.active::before,
.active::after {
  background: #fff;
}

/* Command line */
.command-dock {
  flex: none;
  display: flex;
  align-items: flex-end;
  height: 40px;
  padding: 0 25px 3px 6px;
  border-top: 1px solid #fff;
  border-bottom: 1px solid #a0a0a4;
  background: linear-gradient(#e0dfe3 3px, #9c9ca0 3px, #9c9ca0 4px, #000 4px, #000 5px, #e0dfe3 5px);
}

.command-box {
  flex: 1;
  display: flex;
  align-items: flex-end;
  height: 26px;
  border-top: 1px solid #000;
  border-left: 1px solid #000;
  border-bottom: 1px solid #fff;
  background: #fff;
  font-family: "Liberation Mono", monospace;
  font-size: 13px;
  line-height: 14px;
}

.command-box label {
  padding-left: 1px;
}

.command-box input {
  flex: 1;
  height: 14px;
  outline: none;
}

/* Status bar */
.status-bar {
  flex: none;
  display: flex;
  align-items: center;
  gap: 4px;
  height: 22px;
  padding: 2px 2px 0 5px;
  border-top: 1px solid #808084;
  background: linear-gradient(#c8c8d0, #e0dfe3 4px, #e0e0e6);
}

.coords,
.mode {
  height: 18px;
  line-height: 17px;
  white-space: nowrap;
  border: 1px solid;
}

.coords {
  width: 238px;
  padding-left: 1px;
  border-color: #9c9ca0 #fff #fff #9c9ca0;
}

.mode {
  padding: 0 1px;
  border-color: #fff #9c9ca0 #9c9ca0 #fff;
}

.mode.on {
  border-color: #000 #fff #fff #000;
}

.tray {
  display: flex;
  gap: 4px;
  height: 18px;
  margin-left: auto;
  padding: 0 3px;
  border: 1px solid;
  border-color: #9c9ca0 #fff #fff #9c9ca0;
}

.tray svg {
  width: 16px;
  height: 16px;
}

.tray-menu {
  width: 10px;
}

.tray-menu svg {
  width: 8px;
  height: 4px;
  margin: 6px auto 0;
}

/* Task bar edge */
.taskbar {
  flex: none;
  display: flex;
  gap: 2px;
  height: 4px;
  border-top: 1px solid #8c8cb0;
  background: #fff;
}

.task-start {
  width: 94px;
  border-top: 1px solid #0a8a0a;
  border-top-right-radius: 4px;
  background: #a4e48c;
}

.task-item {
  width: 158px;
  margin-left: 10px;
  border-top: 1px solid #9c9ca4;
  background: #f2f2f6;
}

.task-item-dark {
  margin-left: 0;
  border-top-color: #5c5c6c;
}

.task-item-wide {
  width: 600px;
  margin-left: 0;
  border-right: 1px solid #5c5c7c;
}
```
